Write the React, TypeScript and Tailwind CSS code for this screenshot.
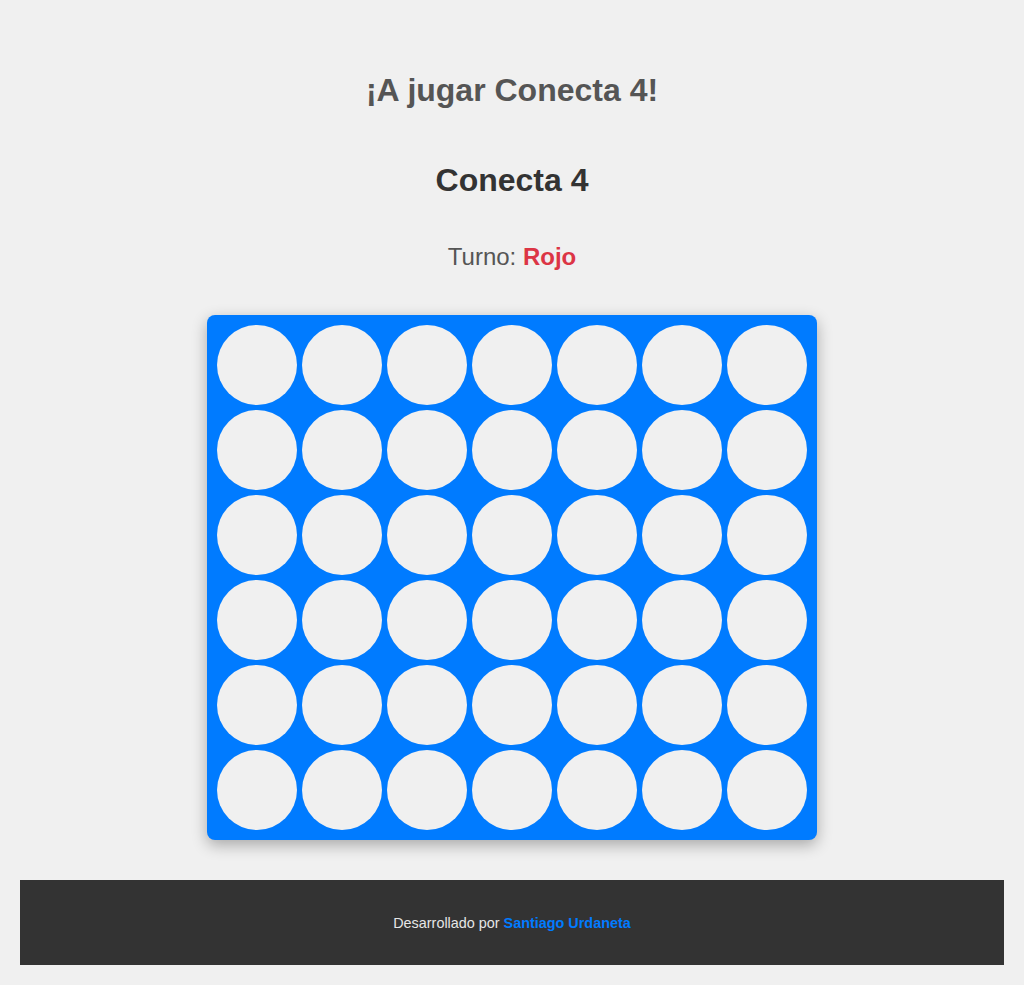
import React from "react";

export default function App() {
  const rows = 6;
  const cols = 7;
  const cells = Array.from({ length: rows * cols });
  return (
    <div
      className="min-h-[985px] bg-[#f0f0f0] px-5 pb-5 flex flex-col items-center"
      style={{ fontFamily: '"Liberation Sans", Arial, sans-serif' }}
    >
      <h1 className="mt-[72px] text-[32px] leading-[37px] font-bold text-[#555555]">
        ¡A jugar Conecta 4!
      </h1>
      <h2 className="mt-[53px] text-[32px] leading-[37px] font-bold text-[#333333]">
        Conecta 4
      </h2>
      <p className="mt-[44px] text-[24px] leading-[27px] text-[#555555]">
        Turno: <span className="font-bold text-[#dc3545]">Rojo</span>
      </p>
      <div className="mt-[45px] bg-[#007bff] p-[10px] rounded-[8px] shadow-[0_5px_15px_rgba(0,0,0,0.3)] grid grid-cols-[repeat(7,80px)] gap-[5px]">
        {cells.map((_, i) => (
          <div key={i} className="w-[80px] h-[80px] rounded-full bg-[#f0f0f0]" />
        ))}
      </div>
      <footer className="mt-[40px] w-full h-[85px] bg-[#333333] flex items-center justify-center pt-[2px] text-[14.4px] text-[#e6e6e6]">
        <span>
          Desarrollado por{" "}
          <a className="font-bold text-[#007bff]" href="#">
            Santiago Urdaneta
          </a>
        </span>
      </footer>
    </div>
  );
}
